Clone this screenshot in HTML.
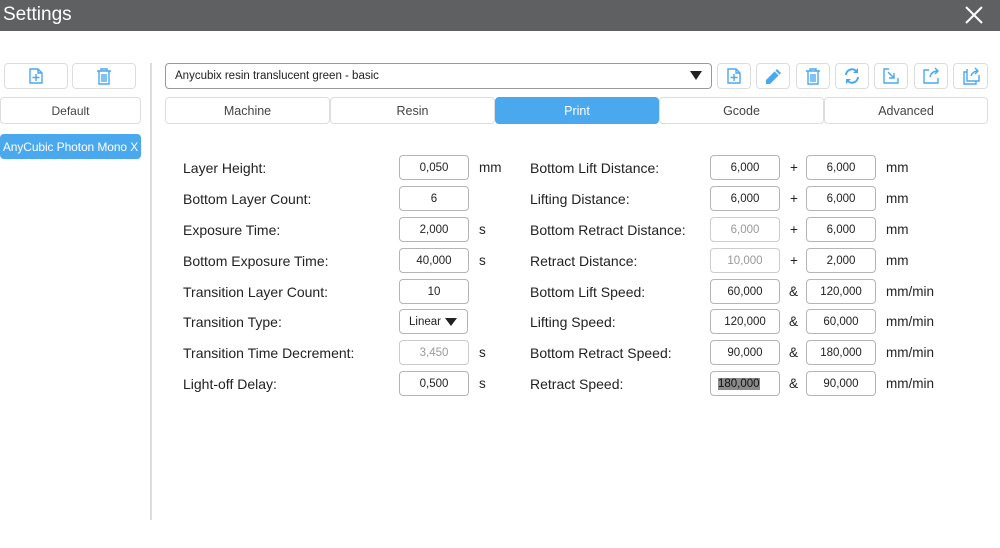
<!DOCTYPE html>
<html><head><meta charset="utf-8"><style>
*{box-sizing:border-box;margin:0;padding:0}
body{width:1000px;height:548px;background:#fff;font-family:"Liberation Sans",sans-serif;position:relative;overflow:hidden;color:#222}
.a{position:absolute}
.bar{left:0;top:0;width:1000px;height:31px;background:#5f6062;color:#fff;font-size:19px;line-height:30px;padding-left:3px}
.btn{position:absolute;border:1px solid #ddd;border-radius:4px;background:#fff;font-size:12px;color:#444;text-align:center;display:flex;align-items:center;justify-content:center;white-space:nowrap}
.lbl{position:absolute;font-size:14px;color:#222;line-height:16px}
.in{position:absolute;width:70px;height:25px;border:1px solid #b5b5b5;border-radius:4px;font-size:11.5px;text-align:center;line-height:24px;color:#222;background:#fff}
.g{color:#999}
.u{position:absolute;font-size:13.5px;line-height:16px}
svg{display:block}
</style></head><body>
<div class="a bar">Settings</div>
<svg class="a" style="left:964px;top:5px" width="20" height="20"><path d="M2 2L18 18M18 2L2 18" stroke="#fff" stroke-width="2"/></svg>

<div class="btn" style="left:4px;top:63px;width:64px;height:26px"><svg width="14" height="16"><path d="M1 1h8l4 4v10H1z M9 1v4h4 M7 6v7 M3.5 9.5h7" fill="none" stroke="#4aa8ee" stroke-width="1.4"/></svg></div>
<div class="btn" style="left:72px;top:63px;width:64px;height:26px"><svg width="16" height="17"><path d="M1 3h14 M5 3V1h6v2 M3 3v13h10V3 M6 6v8 M8 6v8 M10 6v8" fill="none" stroke="#4aa8ee" stroke-width="1.4"/></svg></div>
<div class="btn" style="left:0;top:97px;width:141px;height:27px">Default</div>
<div class="btn" style="left:0;top:134px;width:141px;height:25px;background:#4aa8ee;border-color:#4aa8ee;color:#fff;font-size:12px;letter-spacing:-0.1px">AnyCubic Photon Mono X</div>
<div class="a" style="left:150px;top:63px;width:2px;height:457px;background:#ddd"></div>

<div class="btn" style="left:165px;top:63px;width:547px;height:26px;border-color:#999;justify-content:flex-start;padding-left:9px;color:#222;font-size:11.5px">Anycubix resin translucent green - basic<span style="position:absolute;right:9px;top:7px;width:0;height:0;border-left:6px solid transparent;border-right:6px solid transparent;border-top:9px solid #222"></span></div>

<div class="btn" style="left:717px;top:63px;width:34px;height:26px"><svg width="14" height="16"><path d="M1 1h8l4 4v10H1z M9 1v4h4 M7 6v7 M3.5 9.5h7" fill="none" stroke="#4aa8ee" stroke-width="1.4"/></svg></div>
<div class="btn" style="left:756px;top:63px;width:34px;height:26px"><svg width="20" height="18"><path d="M3 13L14 2l4 4L7 17H3z" fill="#4aa8ee"/><path d="M12 4l4 4" stroke="#fff" stroke-width="1.2"/></svg></div>
<div class="btn" style="left:796px;top:63px;width:34px;height:26px"><svg width="16" height="17"><path d="M1 3h14 M5 3V1h6v2 M3 3v13h10V3 M6 6v8 M8 6v8 M10 6v8" fill="none" stroke="#4aa8ee" stroke-width="1.4"/></svg></div>
<div class="btn" style="left:835px;top:63px;width:34px;height:26px"><svg width="18" height="18"><path d="M3 8a6 6 0 0 1 11-3 M15 10a6 6 0 0 1-11 3" fill="none" stroke="#4aa8ee" stroke-width="2"/><path d="M15 1v5h-5z M3 17v-5h5z" fill="#4aa8ee"/></svg></div>
<div class="btn" style="left:874px;top:63px;width:34px;height:26px"><svg width="18" height="18"><path d="M7 2H2v14h14v-5 M6 5l6 6 M12 6v5H7" fill="none" stroke="#4aa8ee" stroke-width="1.4"/></svg></div>
<div class="btn" style="left:914px;top:63px;width:34px;height:26px"><svg width="18" height="18"><path d="M7 3H2v13h14v-5 M8 10c1-4 4-6 8-6 M13 1l3 3-3 3" fill="none" stroke="#4aa8ee" stroke-width="1.4"/></svg></div>
<div class="btn" style="left:953px;top:63px;width:35px;height:26px"><svg width="18" height="18"><path d="M5 5H2v12h12v-3 M5 2v12h12V8 M9 9c1-3 3-5 7-5 M13 1l3 3-3 3" fill="none" stroke="#4aa8ee" stroke-width="1.4"/></svg></div>

<div class="btn" style="left:165px;top:97px;width:165px;height:27px;font-size:12.5px">Machine</div>
<div class="btn" style="left:330px;top:97px;width:165px;height:27px;font-size:12.5px">Resin</div>
<div class="btn" style="left:495px;top:97px;width:164px;height:27px;font-size:12.5px;background:#4aa8ee;border-color:#4aa8ee;color:#fff">Print</div>
<div class="btn" style="left:659px;top:97px;width:165px;height:27px;font-size:12.5px">Gcode</div>
<div class="btn" style="left:824px;top:97px;width:164px;height:27px;font-size:12.5px">Advanced</div>

<!-- left column -->
<div class="lbl" style="left:183px;top:160px">Layer Height:</div><div class="in" style="left:399px;top:155px">0,050</div><div class="u" style="left:479px;top:160px">mm</div>
<div class="lbl" style="left:183px;top:191px">Bottom Layer Count:</div><div class="in" style="left:399px;top:186px">6</div>
<div class="lbl" style="left:183px;top:222px">Exposure Time:</div><div class="in" style="left:399px;top:217px">2,000</div><div class="u" style="left:479px;top:222px">s</div>
<div class="lbl" style="left:183px;top:253px">Bottom Exposure Time:</div><div class="in" style="left:399px;top:248px">40,000</div><div class="u" style="left:479px;top:253px">s</div>
<div class="lbl" style="left:183px;top:284px">Transition Layer Count:</div><div class="in" style="left:399px;top:279px">10</div>
<div class="lbl" style="left:183px;top:314px">Transition Type:</div><div class="in" style="left:399px;top:309px;width:69px;text-align:left;padding-left:9px">Linear<span style="position:absolute;right:10px;top:8px;border-left:6px solid transparent;border-right:6px solid transparent;border-top:8px solid #222"></span></div>
<div class="lbl" style="left:183px;top:345px">Transition Time Decrement:</div><div class="in g" style="left:399px;top:340px;border-color:#ccc">3,450</div><div class="u" style="left:479px;top:345px">s</div>
<div class="lbl" style="left:183px;top:376px">Light-off Delay:</div><div class="in" style="left:399px;top:371px">0,500</div><div class="u" style="left:479px;top:376px">s</div>

<!-- right column -->
<div class="lbl" style="left:530px;top:160px">Bottom Lift Distance:</div><div class="in" style="left:710px;top:155px">6,000</div><div class="u" style="left:790px;top:160px">+</div><div class="in" style="left:806px;top:155px">6,000</div><div class="u" style="left:886px;top:160px">mm</div>
<div class="lbl" style="left:530px;top:191px">Lifting Distance:</div><div class="in" style="left:710px;top:186px">6,000</div><div class="u" style="left:790px;top:191px">+</div><div class="in" style="left:806px;top:186px">6,000</div><div class="u" style="left:886px;top:191px">mm</div>
<div class="lbl" style="left:530px;top:222px">Bottom Retract Distance:</div><div class="in g" style="left:710px;top:217px;border-color:#ccc">6,000</div><div class="u" style="left:790px;top:222px">+</div><div class="in" style="left:806px;top:217px">6,000</div><div class="u" style="left:886px;top:222px">mm</div>
<div class="lbl" style="left:530px;top:253px">Retract Distance:</div><div class="in g" style="left:710px;top:248px;border-color:#ccc">10,000</div><div class="u" style="left:790px;top:253px">+</div><div class="in" style="left:806px;top:248px">2,000</div><div class="u" style="left:886px;top:253px">mm</div>
<div class="lbl" style="left:530px;top:284px">Bottom Lift Speed:</div><div class="in" style="left:710px;top:279px">60,000</div><div class="u" style="left:789px;top:284px">&amp;</div><div class="in" style="left:806px;top:279px">120,000</div><div class="u" style="left:886px;top:284px">mm/min</div>
<div class="lbl" style="left:530px;top:314px">Lifting Speed:</div><div class="in" style="left:710px;top:309px">120,000</div><div class="u" style="left:789px;top:314px">&amp;</div><div class="in" style="left:806px;top:309px">60,000</div><div class="u" style="left:886px;top:314px">mm/min</div>
<div class="lbl" style="left:530px;top:345px">Bottom Retract Speed:</div><div class="in" style="left:710px;top:340px">90,000</div><div class="u" style="left:789px;top:345px">&amp;</div><div class="in" style="left:806px;top:340px">180,000</div><div class="u" style="left:886px;top:345px">mm/min</div>
<div class="lbl" style="left:530px;top:376px">Retract Speed:</div><div class="in" style="left:710px;top:371px;text-align:left;padding-left:7px"><span style="background:#8a8a8a;color:#111">180,000</span></div><div class="u" style="left:789px;top:376px">&amp;</div><div class="in" style="left:806px;top:371px">90,000</div><div class="u" style="left:886px;top:376px">mm/min</div>
</body></html>
